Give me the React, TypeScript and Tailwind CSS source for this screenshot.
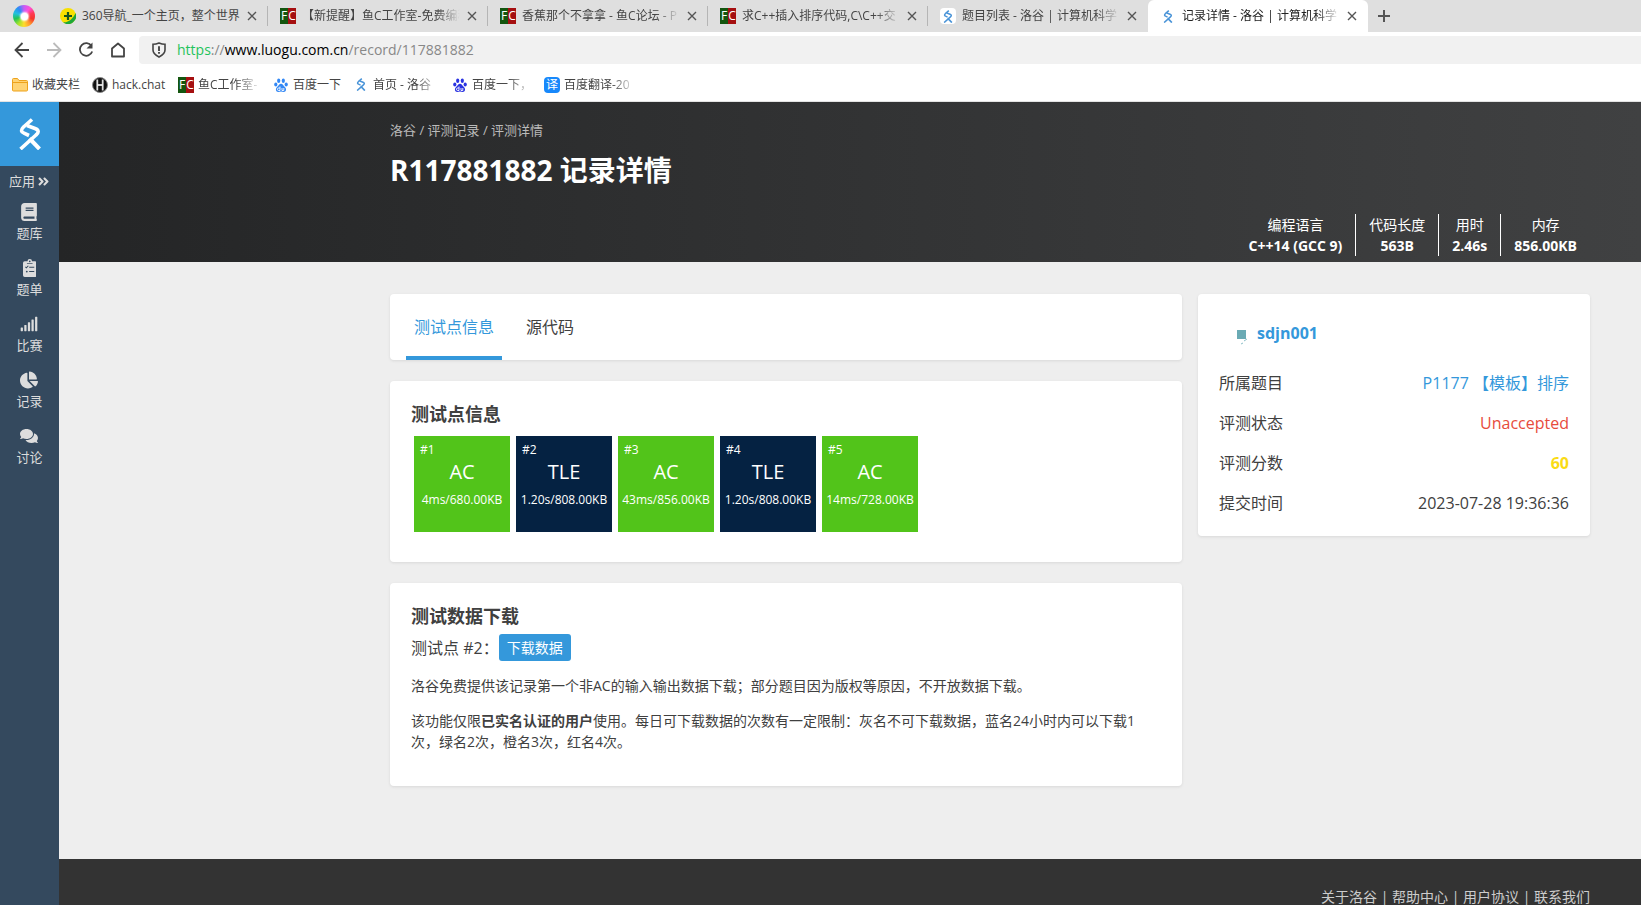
import type { ReactNode } from "react";
import { FaAngleDoubleRight, FaBook, FaChartPie, FaComments, FaSignal } from "react-icons/fa";

function LuoguMark({ className }: { className?: string }) {
  return (
    <svg viewBox="0 0 22 32" className={className} fill="none" stroke="currentColor" strokeLinejoin="round">
      <path d="M13 1.500 4.500 9C1.500 12 2 14 5 15.200L10 17.500" strokeWidth="3.600" />
      <path d="M8 7.500 16 10.500C20 12 20 14.500 17 17L1.500 31" strokeWidth="3.600" />
      <path d="M10.500 20.500 20.500 31" strokeWidth="4" />
    </svg>
  );
}

function ClipboardIcon({ className }: { className?: string }) {
  return (
    <svg viewBox="0 0 384 512" className={className} fill="currentColor">
      <path d="M336 64h-80a64 64 0 0 0-128 0H48a48 48 0 0 0-48 48v352a48 48 0 0 0 48 48h288a48 48 0 0 0 48-48V112a48 48 0 0 0-48-48Z" />
      <circle cx="192" cy="66" r="24" className="fill-[#34495e]" />
      <path d="m68 222 28 28 56-58M176 232h144M176 358h144" fill="none" stroke="#34495e" strokeWidth="30" />
      <circle cx="108" cy="358" r="26" className="fill-[#34495e]" />
      <path d="M112 128h160" fill="none" stroke="#34495e" strokeWidth="20" />
    </svg>
  );
}

function FishIcon() {
  return (
    <span className="flex size-4 shrink-0 bg-[#a50f10] text-xs leading-4 text-white">
      <span className="flex w-2 justify-center bg-[#14560f]">F</span>
      <span className="flex w-2 justify-center">C</span>
    </span>
  );
}

function LuoguIcon() {
  return (
    <span className="flex size-4 shrink-0 items-center justify-center rounded-sm bg-white text-[#4a94d8]">
      <LuoguMark className="h-[13px] w-[10px]" />
    </span>
  );
}

function NavIcon() {
  return (
    <svg viewBox="0 0 16 16" className="size-4 shrink-0">
      <circle cx="8" cy="8" r="8" fill="#f7e000" />
      <path d="M15.500 5A8 8 0 0 1 3 14.200C8 15 13 11 15.500 5Z" fill="#1ea838" />
      <path d="M8 4v8M4 8h8" stroke="#14551e" strokeWidth="2.200" />
    </svg>
  );
}

function PawIcon({ color }: { color: string }) {
  return (
    <svg viewBox="0 0 16 16" className="size-4 shrink-0" fill={color}>
      <ellipse cx="5.700" cy="3.700" rx="1.600" ry="2.200" />
      <ellipse cx="10.300" cy="3.700" rx="1.600" ry="2.200" />
      <ellipse cx="2.800" cy="7.500" rx="1.600" ry="2" />
      <ellipse cx="13.200" cy="7.500" rx="1.600" ry="2" />
      <path d="M8 6.800c1.800 0 2.500 2 3.900 3.200 1.900 1.700 1.400 5-1.200 5-1 0-1.800-.4-2.700-.4s-1.700.4-2.700.4c-2.600 0-3.100-3.300-1.200-5C5.500 8.800 6.200 6.800 8 6.800Z" />
      <path d="M7 9.500v4H5.700a1.200 1.200 0 0 1 0-2.500H7M9 11v2.500h1.800V11" fill="none" stroke="#fff" strokeWidth=".9" />
    </svg>
  );
}

function FolderIcon() {
  return (
    <svg viewBox="0 0 16 16" className="size-4 shrink-0" fill="#ffd373" stroke="#eda21c">
      <path d="M.5 13V2.500q0-1 1-1h4l1.500 2h7.500q1 0 1 1V13q0 1-1 1h-13q-1 0-1-1Z" />
      <path d="M.5 5.500h15" />
    </svg>
  );
}

function HackIcon() {
  return (
    <svg viewBox="0 0 16 16" className="size-4 shrink-0">
      <circle cx="8" cy="8" r="7.500" fill="#111" stroke="#888" />
      <path d="M5.300 2.500v11M10.700 2.500v11" stroke="#ddd" strokeWidth="1.800" />
      <path d="M5.500 8h5" stroke="#fff" strokeWidth="1.600" />
    </svg>
  );
}

function TranslateIcon() {
  return (
    <span className="flex size-4 shrink-0 items-center justify-center rounded-sm bg-[#1788fb] text-xs leading-4 text-white">译</span>
  );
}

function BrowserLogo() {
  return (
    <span className="flex size-[22px] items-center justify-center rounded-full bg-[conic-gradient(#c65cf5,#ff4fd8,#ff3a55,#f5362b,#ff9a2e,#ffdc2b,#a4e32c,#22c356,#22bfe0,#2c8bf5,#c65cf5)]">
      <span className="size-[7px] rounded-full bg-white shadow-[0_0_2px_1px_#fff]" />
    </span>
  );
}

function CloseIcon() {
  return (
    <svg viewBox="0 0 10 10" className="size-[10px]" stroke="#555" strokeWidth="1.400">
      <path d="m1 1 8 8M9 1 1 9" />
    </svg>
  );
}

const fade = "[mask-image:linear-gradient(to_right,#000_calc(100%-24px),transparent)]";

const tabs: { title: string; icon: ReactNode; active?: boolean; fade?: boolean }[] = [
  { title: "360导航_一个主页，整个世界", icon: <NavIcon /> },
  { title: "【新提醒】鱼C工作室-免费编程", icon: <FishIcon />, fade: true },
  { title: "香蕉那个不拿拿 - 鱼C论坛 - P", icon: <FishIcon />, fade: true },
  { title: "求C++插入排序代码,C\\C++交", icon: <FishIcon />, fade: true },
  { title: "题目列表 - 洛谷 | 计算机科学", icon: <LuoguIcon />, fade: true },
  { title: "记录详情 - 洛谷 | 计算机科学", icon: <LuoguIcon />, active: true, fade: true },
];

const bookmarks: { title: string; icon: ReactNode; width: string }[] = [
  { title: "收藏夹栏", icon: <FolderIcon />, width: "w-12" },
  { title: "hack.chat", icon: <HackIcon />, width: "w-[54px]" },
  { title: "鱼C工作室-", icon: <FishIcon />, width: `w-[63px] ${fade}` },
  { title: "百度一下", icon: <PawIcon color="#3388f5" />, width: "w-12" },
  { title: "首页 - 洛谷", icon: <LuoguIcon />, width: `w-[67px] ${fade}` },
  { title: "百度一下，", icon: <PawIcon color="#2932e1" />, width: `w-[60px] ${fade}` },
  { title: "百度翻译-20", icon: <TranslateIcon />, width: `w-[72px] ${fade}` },
];

const menu = [
  { label: "题库", Icon: FaBook },
  { label: "题单", Icon: ClipboardIcon },
  { label: "比赛", Icon: FaSignal },
  { label: "记录", Icon: FaChartPie },
  { label: "讨论", Icon: FaComments },
];

const stats = [
  ["编程语言", "C++14 (GCC 9)"],
  ["代码长度", "563B"],
  ["用时", "2.46s"],
  ["内存", "856.00KB"],
];

const cases = [
  { status: "AC", info: "4ms/680.00KB" },
  { status: "TLE", info: "1.20s/808.00KB" },
  { status: "AC", info: "43ms/856.00KB" },
  { status: "TLE", info: "1.20s/808.00KB" },
  { status: "AC", info: "14ms/728.00KB" },
];

function Browser() {
  return (
    <div className="border-b border-[#e3e3e3] bg-white text-xs text-[#444]">
      <div className="flex h-8 items-center bg-[#dfdfdf]">
        <div className="flex w-12 shrink-0 justify-center">
          <BrowserLogo />
        </div>
        {tabs.map((t, i) => (
          <div
            key={t.title}
            className={`flex h-8 w-[220px] items-center pl-3 ${t.active ? "rounded-t-md bg-white text-[#222]" : ""}`}
          >
            {t.icon}
            <span className={`ml-[6px] w-[158px] overflow-hidden whitespace-nowrap ${t.fade ? fade : ""}`}>{t.title}</span>
            <button aria-label="关闭标签页" className="ml-[7px]">
              <CloseIcon />
            </button>
            {i < 4 && <span className="ml-auto h-5 w-px bg-[#b5b5b5]" />}
          </div>
        ))}
        <button aria-label="新建标签页" className="ml-[10px]">
          <svg viewBox="0 0 12 12" className="size-3" stroke="#555" strokeWidth="2">
            <path d="M6 0v12M0 6h12" />
          </svg>
        </button>
      </div>

      <div className="flex h-9 items-start pt-1 pl-[14px]">
        <div className="flex h-7 w-[125px] items-center gap-4">
          <button aria-label="后退">
            <svg viewBox="0 0 16 16" className="size-4" fill="none" stroke="#444" strokeWidth="1.800"><path d="M15 8H2M8.500 1 1.500 8l7 7" /></svg>
          </button>
          <button aria-label="前进">
            <svg viewBox="0 0 16 16" className="size-4" fill="none" stroke="#bbb" strokeWidth="1.800"><path d="M1 8h13M7.500 1l7 7-7 7" /></svg>
          </button>
          <button aria-label="刷新">
            <svg viewBox="0 0 16 16" className="size-4" fill="none" stroke="#444" strokeWidth="1.800"><path d="M13.500 4A6.300 6.300 0 1 0 14.200 9.500" /><path d="M14.500.5v6h-6Z" fill="#444" stroke="none" /></svg>
          </button>
          <button aria-label="主页">
            <svg viewBox="0 0 16 16" className="size-4" fill="none" stroke="#444" strokeWidth="1.800"><path d="M2 14.500V6.500L8 1.500l6 5v8Z" strokeLinejoin="round" /></svg>
          </button>
        </div>
        <div className="flex h-7 flex-1 items-center rounded-l bg-[#f1f1f1] pl-3">
          <svg viewBox="0 0 16 16" className="size-4" fill="none" stroke="#444" strokeWidth="1.600">
            <path d="M8 1Q11 2.300 14 2.300V8c0 3.500-3 5.500-6 7-3-1.500-6-3.500-6-7V2.300Q5 2.300 8 1Z" />
            <path d="M8 4.300V9M8 10v1.700" strokeWidth="1.900" />
          </svg>
          <p className="ml-[10px] text-sm text-[#888]">
            <span className="text-[#1fc35b]">https</span>://<span className="text-black">www.luogu.com.cn</span>/record/117881882
          </p>
        </div>
      </div>

      <div className="flex h-[33px] items-center gap-3 pl-3">
        {bookmarks.map((b) => (
          <a key={b.title} href="#" className="flex items-center gap-1">
            {b.icon}
            <span className={`overflow-hidden whitespace-nowrap ${b.width}`}>{b.title}</span>
          </a>
        ))}
      </div>
    </div>
  );
}

function Sidebar() {
  return (
    <nav className="flex w-[59px] shrink-0 flex-col items-center bg-[#34495e] text-[13px] leading-5 text-[#ddd]">
      <a href="#" aria-label="洛谷" className="flex h-16 w-full items-center justify-center bg-[#3498db] text-white">
        <LuoguMark className="h-8 w-[22px]" />
      </a>
      <a href="#" className="mt-[5px] flex items-center gap-[2px]">
        应用 <FaAngleDoubleRight className="size-[13px]" />
      </a>
      <div className="mt-3 flex flex-col gap-4">
        {menu.map(({ label, Icon }) => (
          <a key={label} href="#" className="flex flex-col items-center gap-[2px]">
            <Icon className="h-[18px] w-auto" />
            {label}
          </a>
        ))}
      </div>
    </nav>
  );
}

function Card({ children, className = "" }: { children: ReactNode; className?: string }) {
  return <section className={`rounded bg-white shadow-[0_1px_3px_rgba(26,26,26,0.1)] ${className}`}>{children}</section>;
}

function SideRow({ label, children }: { label: string; children: ReactNode }) {
  return (
    <div className="flex h-10 items-center justify-between">
      <dt>{label}</dt>
      <dd>{children}</dd>
    </div>
  );
}

export default function App() {
  return (
    <div className="flex min-h-screen flex-col font-['Open_Sans','Noto_Sans_CJK_SC',sans-serif] text-[#404040]">
      <Browser />
      <div className="flex flex-1">
        <Sidebar />
        <div className="flex min-w-0 flex-1 flex-col bg-[#eee]">
          <header className="h-40 bg-linear-to-r from-[#242526] to-[#404142] pr-[51px] text-white">
            <div className="ml-auto flex h-full max-w-[1200px] flex-col pt-[18px]">
              <p className="text-[13px] leading-5 text-[#bbb]">
                <a href="#">洛谷</a> / <a href="#">评测记录</a> / <a href="#">评测详情</a>
              </p>
              <h1 className="mt-[10px] text-[28px] leading-10 font-bold">R117881882 记录详情</h1>
              <dl className="mt-auto mb-[6px] flex justify-end divide-x divide-white text-center text-sm leading-[21px]">
                {stats.map(([label, value]) => (
                  <div key={label} className="px-[13px]">
                    <dt>{label}</dt>
                    <dd className="font-bold">{value}</dd>
                  </div>
                ))}
              </dl>
            </div>
          </header>

          <main className="pt-8 pr-[51px] pb-[73px]">
            <div className="ml-auto flex max-w-[1200px] items-start gap-4">
              <div className="flex flex-1 flex-col gap-[21px]">
                <Card className="flex h-[66px] px-4">
                  <button className="border-b-4 border-[#3498db] px-2 pt-1 text-[#3498db]">测试点信息</button>
                  <button className="ml-4 border-b-4 border-transparent px-2 pt-1">源代码</button>
                </Card>

                <Card className="px-[21px] pt-[21px] pb-[30px]">
                  <h2 className="text-lg leading-6 font-bold">测试点信息</h2>
                  <div className="mt-[10px] flex flex-wrap gap-[6px] pl-[3px]">
                    {cases.map((c, i) => (
                      <div
                        key={i}
                        className={`size-24 pt-1 text-center text-white ${c.status === "AC" ? "bg-[#52c41a]" : "bg-[#052242]"}`}
                      >
                        <div className="pl-[6px] text-left text-xs leading-5">#{i + 1}</div>
                        <div className="text-xl leading-6">{c.status}</div>
                        <div className="mt-[6px] text-xs leading-5 whitespace-nowrap">{c.info}</div>
                      </div>
                    ))}
                  </div>
                </Card>

                <Card className="px-[21px] pt-[21px] pb-[34px]">
                  <h2 className="text-lg leading-6 font-bold">测试数据下载</h2>
                  <div className="mt-[6px] flex items-center">
                    <span>测试点 #2：</span>
                    <button className="h-[27px] rounded-[3px] bg-[#3498db] px-2 text-sm text-white">下载数据</button>
                  </div>
                  <p className="mt-[14px] text-sm leading-[21px]">
                    洛谷免费提供该记录第一个非AC的输入输出数据下载；部分题目因为版权等原因，不开放数据下载。
                  </p>
                  <p className="mt-[14px] text-sm leading-[21px]">
                    该功能仅限<strong>已实名认证的用户</strong>使用。每日可下载数据的次数有一定限制：灰名不可下载数据，蓝名24小时内可以下载1次，绿名2次，橙名3次，红名4次。
                  </p>
                </Card>
              </div>

              <Card className="w-[392px] shrink-0 px-[21px] pt-[23px] pb-[13px]">
                <div className="flex h-8 items-center pl-[18px]">
                  <svg viewBox="0 0 12 16" className="mt-2 mr-2 h-4 w-3">
                    <path d="M0 1h9v9H0Z" fill="#6aaab4" />
                    <path d="m4 15 2-1M7 12l3-2" stroke="#8cc0c8" />
                  </svg>
                  <a href="#" className="font-bold text-[#3498db]">sdjn001</a>
                </div>
                <dl className="mt-[14px]">
                  <SideRow label="所属题目"><a href="#" className="text-[#3498db]">P1177 【模板】排序</a></SideRow>
                  <SideRow label="评测状态"><span className="text-[#e74c3c]">Unaccepted</span></SideRow>
                  <SideRow label="评测分数"><span className="font-bold text-[#fadb14]">60</span></SideRow>
                  <SideRow label="提交时间"><time>2023-07-28 19:36:36</time></SideRow>
                </dl>
              </Card>
            </div>
          </main>

          <footer className="flex-1 bg-[#333] pt-[29px] pr-[51px] text-right text-sm leading-[18px] text-[#ccc]">
            <a href="#">关于洛谷</a> | <a href="#">帮助中心</a> | <a href="#">用户协议</a> | <a href="#">联系我们</a>
          </footer>
        </div>
      </div>
    </div>
  );
}
